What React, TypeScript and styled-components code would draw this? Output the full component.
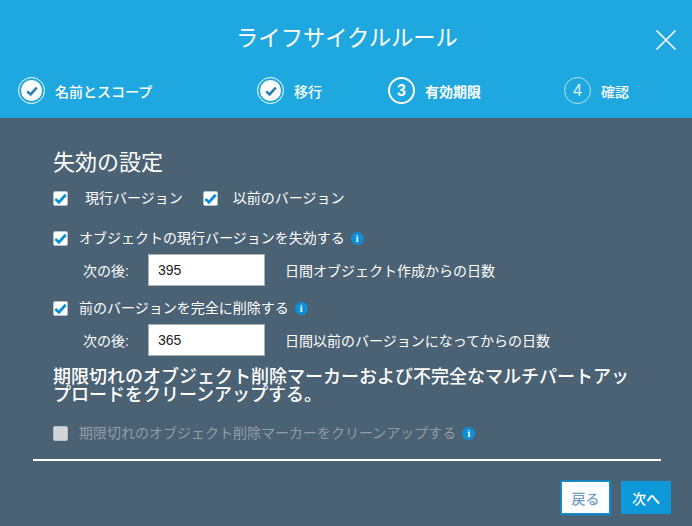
import React from "react";
import styled, { createGlobalStyle } from "styled-components";

const GlobalStyle = createGlobalStyle`
  html, body {
    margin: 0;
    padding: 0;
    background: #4a6274;
    font-family: "Liberation Sans", "Noto Sans CJK JP", sans-serif;
  }
  * {
    box-sizing: border-box;
  }
`;

const Modal = styled.div`
  width: 692px;
  height: 526px;
  display: flex;
  flex-direction: column;
  background: #4a6274;
  color: #fff;
  overflow: hidden;
`;

const Header = styled.header`
  position: relative;
  height: 118px;
  background: #1fa8e0;
  padding-top: 22px;
`;

const Title = styled.h1`
  margin: 0;
  font-size: 22.3px;
  line-height: 34px;
  font-weight: 400;
  text-align: center;
  padding-left: 2px;
`;

const Close = styled.button`
  position: absolute;
  top: 29px;
  right: 15px;
  width: 22px;
  height: 22px;
  padding: 0;
  border: 0;
  background: none;
  color: #fff;
  svg {
    display: block;
  }
`;

const Steps = styled.div`
  display: grid;
  grid-template-columns: 239px 131px 176px 1fr;
  padding-left: 18px;
  margin-top: 21px;
`;

const Step = styled.div<{ $strong?: boolean }>`
  display: flex;
  align-items: center;
  gap: 10px;
  font-size: 14px;
  font-weight: ${(p) => (p.$strong ? 700 : 500)};
`;

const Circle = styled.span<{ $dim?: boolean }>`
  width: 27px;
  height: 27px;
  border-radius: 50%;
  border: ${(p) => (p.$dim ? "1px solid rgba(255,255,255,.8)" : "2px solid #fff")};
  display: flex;
  align-items: center;
  justify-content: center;
  font-size: 16px;
  font-weight: ${(p) => (p.$dim ? 400 : 700)};
  opacity: ${(p) => (p.$dim ? 0.85 : 1)};
`;

const DoneRing = styled.span`
  width: 27px;
  height: 27px;
  border-radius: 50%;
  border: 1px solid #fff;
  padding: 2px;
  flex: none;
`;

const DoneDot = styled.span`
  display: flex;
  width: 100%;
  height: 100%;
  border-radius: 50%;
  background: #fff;
  align-items: center;
  justify-content: center;
`;

const Body = styled.main`
  flex: 1;
  padding: 32px 31px 0 33px;
  display: flex;
  flex-direction: column;
`;

const Inner = styled.div`
  padding-left: 20px;
  height: 309px;
`;

const SectionTitle = styled.h2`
  margin: 0;
  font-size: 22px;
  line-height: 26px;
  font-weight: 400;
`;

const Row = styled.div<{ $top: number; $gap?: number }>`
  display: flex;
  align-items: center;
  margin-top: ${(p) => p.$top}px;
  font-size: 14px;
  line-height: 18px;
  gap: ${(p) => p.$gap ?? 0}px;
`;

const Check = styled.label<{ $disabled?: boolean; $gap?: number }>`
  display: flex;
  align-items: center;
  gap: ${(p) => p.$gap ?? 11}px;
  color: ${(p) => (p.$disabled ? "#929da5" : "#fff")};
`;

const Box = styled.span<{ $disabled?: boolean }>`
  width: 15px;
  height: 15px;
  flex: none;
  border-radius: 2px;
  border: 1px solid #b5bfc6;
  background: ${(p) => (p.$disabled ? "#d3d6d8" : "#fff")};
  display: flex;
  align-items: center;
  justify-content: center;
`;

const Info = styled.span`
  width: 13px;
  height: 13px;
  margin-left: 6px;
  border-radius: 50%;
  background: #0d8fd6;
  color: #fff;
  font: 700 10px/13px "Liberation Serif", serif;
  text-align: center;
  flex: none;
`;

const AfterRow = styled.div<{ $top: number }>`
  display: grid;
  grid-template-columns: 65px 117px 1fr;
  align-items: center;
  padding-left: 30px;
  margin-top: ${(p) => p.$top}px;
  font-size: 14px;
`;

const DaysInput = styled.input`
  width: 117px;
  height: 32px;
  padding: 0 9px;
  border: 1px solid #aab2b8;
  background: #fff;
  color: #222;
  font-size: 14px;
  font-family: inherit;
`;

const Hint = styled.span`
  padding-left: 20px;
`;

const CleanupTitle = styled.h3`
  margin: 12px 0 0;
  width: 590px;
  font-size: 18px;
  line-height: 18px;
  font-weight: 500;
`;

const Divider = styled.hr`
  margin: 0;
  border: 0;
  height: 2px;
  background: #fff;
`;

const Footer = styled.footer`
  display: flex;
  justify-content: flex-end;
  align-items: center;
  gap: 12px;
  margin: 20px -10px 0 0;
`;

const Back = styled.button`
  width: 47px;
  height: 31px;
  padding: 0;
  border: 2px solid #fff;
  background: #fff;
  box-shadow: 0 0 0 1.5px #0d8fd6, 0 0 3px 1.5px #0d8fd6;
  color: #6f9cc9;
  font: 500 14px "Liberation Sans", "Noto Sans CJK JP", sans-serif;
`;

const Next = styled.button`
  width: 50px;
  height: 33px;
  padding: 0;
  border: 0;
  background: #0d98da;
  color: #fff;
  font: 500 14px "Liberation Sans", "Noto Sans CJK JP", sans-serif;
`;

const Tick = ({ size = 13, color = "#0a8fdc" }: { size?: number; color?: string }) => (
  <svg width={size} height={size} viewBox="0 0 12 12" fill="none">
    <path d="M1.2 6.4 L4.6 9.4 L10.8 2.6" stroke={color} strokeWidth="2.6" />
  </svg>
);

const Checkbox = ({ label, gap, disabled }: { label: string; gap?: number; disabled?: boolean }) => (
  <Check $gap={gap} $disabled={disabled}>
    <Box $disabled={disabled}>{!disabled && <Tick />}</Box>
    {label}
  </Check>
);

const DoneStep = ({ label }: { label: string }) => (
  <Step>
    <DoneRing>
      <DoneDot>
        <Tick size={12} color="#2a80b4" />
      </DoneDot>
    </DoneRing>
    {label}
  </Step>
);

export default function App() {
  return (
    <Modal>
      <GlobalStyle />
      <Header>
        <Title>ライフサイクルルール</Title>
        <Close aria-label="閉じる">
          <svg width="22" height="22" viewBox="0 0 22 22" fill="none">
            <path d="M1.5 1.5 L20.5 20.5 M20.5 1.5 L1.5 20.5" stroke="currentColor" strokeWidth="1.6" />
          </svg>
        </Close>
        <Steps>
          <DoneStep label="名前とスコープ" />
          <DoneStep label="移行" />
          <Step $strong>
            <Circle>3</Circle>
            有効期限
          </Step>
          <Step>
            <Circle $dim>4</Circle>
            確認
          </Step>
        </Steps>
      </Header>
      <Body>
        <Inner>
          <SectionTitle>失効の設定</SectionTitle>
          <Row $top={13} $gap={20}>
            <Checkbox label="現行バージョン" gap={17} />
            <Checkbox label="以前のバージョン" gap={15} />
          </Row>
          <Row $top={22}>
            <Checkbox label="オブジェクトの現行バージョンを失効する" />
            <Info>i</Info>
          </Row>
          <AfterRow $top={7}>
            <span>次の後:</span>
            <DaysInput defaultValue="395" />
            <Hint>日間オブジェクト作成からの日数</Hint>
          </AfterRow>
          <Row $top={13}>
            <Checkbox label="前のバージョンを完全に削除する" />
            <Info>i</Info>
          </Row>
          <AfterRow $top={7}>
            <span>次の後:</span>
            <DaysInput defaultValue="365" />
            <Hint>日間以前のバージョンになってからの日数</Hint>
          </AfterRow>
          <CleanupTitle>
            期限切れのオブジェクト削除マーカーおよび不完全なマルチパートアップロードをクリーンアップする。
          </CleanupTitle>
          <Row $top={20}>
            <Checkbox label="期限切れのオブジェクト削除マーカーをクリーンアップする" disabled />
            <Info>i</Info>
          </Row>
        </Inner>
        <Divider />
        <Footer>
          <Back>戻る</Back>
          <Next>次へ</Next>
        </Footer>
      </Body>
    </Modal>
  );
}
